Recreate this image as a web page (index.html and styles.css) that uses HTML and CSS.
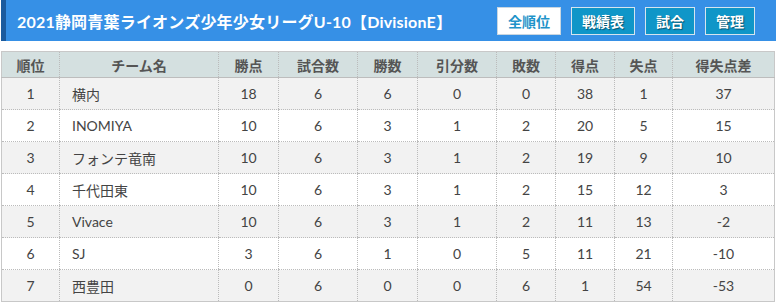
FILE: index.html
```html
<!DOCTYPE html>
<html lang="ja">
<head>
<meta charset="utf-8">
<link rel="stylesheet" href="styles.css">
</head>
<body>
<div class="page">
  <header class="bar">
    <h1 class="title">2021静岡青葉ライオンズ少年少女リーグU-10【DivisionE】</h1>
    <nav class="nav">
      <a class="btn btn-active">全順位</a>
      <a class="btn">戦績表</a>
      <a class="btn">試合</a>
      <a class="btn">管理</a>
    </nav>
  </header>
  <table class="standings">
    <colgroup>
      <col style="width:58px"><col style="width:159px"><col style="width:60px"><col style="width:79px"><col style="width:60px"><col style="width:79px"><col style="width:59px"><col style="width:59px"><col style="width:58px"><col>
    </colgroup>
    <thead>
      <tr><th>順位</th><th>チーム名</th><th>勝点</th><th>試合数</th><th>勝数</th><th>引分数</th><th>敗数</th><th>得点</th><th>失点</th><th>得失点差</th></tr>
    </thead>
    <tbody>
      <tr><td>1</td><td class="team">横内</td><td>18</td><td>6</td><td>6</td><td>0</td><td>0</td><td>38</td><td>1</td><td>37</td></tr>
      <tr><td>2</td><td class="team">INOMIYA</td><td>10</td><td>6</td><td>3</td><td>1</td><td>2</td><td>20</td><td>5</td><td>15</td></tr>
      <tr><td>3</td><td class="team">フォンテ竜南</td><td>10</td><td>6</td><td>3</td><td>1</td><td>2</td><td>19</td><td>9</td><td>10</td></tr>
      <tr><td>4</td><td class="team">千代田東</td><td>10</td><td>6</td><td>3</td><td>1</td><td>2</td><td>15</td><td>12</td><td>3</td></tr>
      <tr><td>5</td><td class="team">Vivace</td><td>10</td><td>6</td><td>3</td><td>1</td><td>2</td><td>11</td><td>13</td><td>-2</td></tr>
      <tr><td>6</td><td class="team">SJ</td><td>3</td><td>6</td><td>1</td><td>0</td><td>5</td><td>11</td><td>21</td><td>-10</td></tr>
      <tr><td>7</td><td class="team">西豊田</td><td>0</td><td>6</td><td>0</td><td>0</td><td>6</td><td>1</td><td>54</td><td>-53</td></tr>
    </tbody>
  </table>
</div>
</body>
</html>
```
FILE: styles.css
```css
* { box-sizing: border-box; }
html, body { margin: 0; padding: 0; background: #fff; }
body {
  font-family: Lato, "Noto Sans CJK JP", sans-serif;
  color: #444;
}
.page { padding: 0 0 0 1px; }
.bar {
  height: 41px;
  background: #3690e6;
  border-left: 5px solid #1b5b9e;
  display: flex;
  align-items: center;
  justify-content: space-between;
  padding: 0 21px 0 11px;
}
.title {
  margin: 0;
  font-size: 16px;
  font-weight: 700;
  color: #fff;
  letter-spacing: 0.2px;
  white-space: nowrap;
}
.nav { display: flex; gap: 10px; padding-top: 0; }
.btn {
  display: flex;
  align-items: center;
  height: 28px;
  padding: 0 10px;
  border: 1px solid #d6e4ee;
  background: #0f96c8;
  color: #fff;
  font-size: 14px;
  font-weight: 700;
  text-shadow: 1px 1px 1px rgba(0,0,0,0.45);
  cursor: pointer;
}
.btn-active {
  background: #fff;
  color: #1f93c9;
  border-color: #c9d6e0;
  text-shadow: none;
}
.standings {
  margin-top: 10px;
  width: 774px;
  border-collapse: collapse;
  table-layout: fixed;
  border: 1px solid #c8c8c8;
  font-size: 14px;
}
.standings th {
  height: 26px;
  background: #d4e0e0;
  color: #555;
  font-weight: 700;
  text-align: center;
  padding: 0;
  border-bottom: 1px solid #bdbdbd;
  border-left: 1px dotted #bbb;
}
.standings td {
  height: 32px;
  text-align: center;
  padding: 0;
  border-left: 1px dotted #bbb;
  border-bottom: 1px dotted #bbb;
  color: #444;
}
.standings th:first-child, .standings td:first-child { border-left: none; }
.standings td.team { text-align: left; padding-left: 12px; }
.standings tbody tr:nth-child(odd) td { background: #f2f2f2; }
.standings tbody tr:nth-child(even) td { background: #fff; }
```
